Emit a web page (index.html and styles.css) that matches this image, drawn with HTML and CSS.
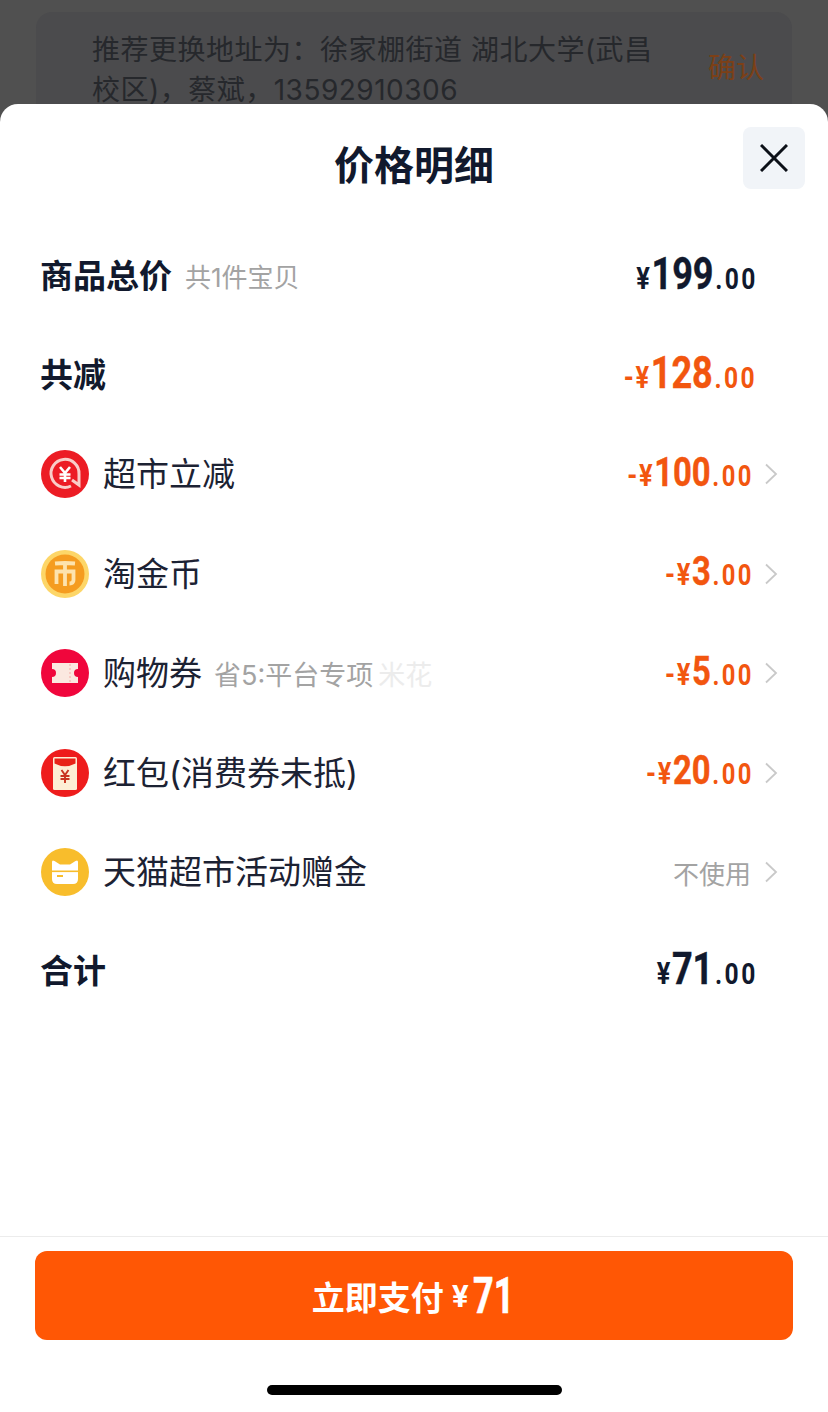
FILE: index.html
```html
<!DOCTYPE html>
<html lang="zh-CN">
<head>
  <meta charset="UTF-8">
  <meta name="viewport" content="width=device-width, initial-scale=1">
  <title>价格明细</title>
  <link rel="stylesheet" href="styles.css">
</head>
<body>
  <!-- 背后的页面，被遮罩压暗 -->
  <div class="backdrop">
    <div class="notice">
      <p class="notice-text">推荐更换地址为：徐家棚街道 湖北大学(武昌校区)，蔡斌，13592910306</p>
      <span class="notice-action">确认</span>
    </div>
  </div>

  <div class="sheet">
    <div class="sheet-head">
      <h1 class="sheet-title">价格明细</h1>
      <button class="close-btn" type="button" aria-label="关闭">
        <svg width="28" height="28" viewBox="0 0 28 28"><path d="M1 1 L27 27 M27 1 L1 27" stroke="#0c1018" stroke-width="3" fill="none"/></svg>
      </button>
    </div>

    <div class="rows">
      <div class="row">
        <div class="row-left"><span class="label-bold">商品总价</span><span class="hint hint-total">共1件宝贝</span></div>
        <div class="price price-big"><span class="cur">¥</span><span class="int">199</span><span class="dec">.00</span></div>
      </div>
      <div class="row">
        <div class="row-left"><span class="label-bold">共减</span></div>
        <div class="price price-big price-off"><span class="cur">-¥</span><span class="int">128</span><span class="dec">.00</span></div>
      </div>
      <div class="row">
        <div class="row-left">
          <svg class="icon" viewBox="0 0 48 48">
            <circle cx="24" cy="24" r="24" fill="#ec1c24"/>
            <path d="M30 36 A14 14 0 1 1 38 24 V35 L31 30" fill="none" stroke="#f9cdc8" stroke-width="3"/>
            <path d="M19 17 L24 23 L29 17 M18.5 24.5 H29.5 M18.5 28 H29.5 M24 23 V32" fill="none" stroke="#fff" stroke-width="2.6"/>
          </svg>
          <span class="label">超市立减</span>
        </div>
        <div class="row-right">
          <div class="price price-off"><span class="cur">-¥</span><span class="int">100</span><span class="dec">.00</span></div>
          <svg class="chevron" width="14" height="22" viewBox="0 0 14 22"><path d="M2 1.5 L12 11 L2 20.5" fill="none" stroke="#c9c9c9" stroke-width="1.8"/></svg>
        </div>
      </div>
      <div class="row">
        <div class="row-left">
          <svg class="icon" viewBox="0 0 48 48">
            <circle cx="24" cy="24" r="24" fill="#fdd668"/>
            <circle cx="24" cy="24" r="19.5" fill="#f59c20"/>
            <path d="M14 13.5 Q24 12.5 34 13.5 M24 14 V36 M15.5 34 V21.5 H32.5 V30 Q32.5 33.5 28.5 33.5" fill="none" stroke="#fde3ae" stroke-width="3.8"/>
          </svg>
          <span class="label">淘金币</span>
        </div>
        <div class="row-right">
          <div class="price price-off"><span class="cur">-¥</span><span class="int">3</span><span class="dec">.00</span></div>
          <svg class="chevron" width="14" height="22" viewBox="0 0 14 22"><path d="M2 1.5 L12 11 L2 20.5" fill="none" stroke="#c9c9c9" stroke-width="1.8"/></svg>
        </div>
      </div>
      <div class="row">
        <div class="row-left">
          <svg class="icon" viewBox="0 0 48 48">
            <circle cx="24" cy="24" r="24" fill="#f0063c"/>
            <path d="M11 14 H37 V20 A4 4 0 0 0 37 28 V34 H11 V28 A4 4 0 0 0 11 20 Z" fill="#fbe8e0"/>
            <path d="M29 15 V33" stroke="#f3b6b0" stroke-width="1.2" stroke-dasharray="2 2"/>
          </svg>
          <span class="label">购物券</span>
          <span class="hint hint-coupon">省5:平台专项<span class="hint-fade">米花</span></span>
        </div>
        <div class="row-right">
          <div class="price price-off"><span class="cur">-¥</span><span class="int">5</span><span class="dec">.00</span></div>
          <svg class="chevron" width="14" height="22" viewBox="0 0 14 22"><path d="M2 1.5 L12 11 L2 20.5" fill="none" stroke="#c9c9c9" stroke-width="1.8"/></svg>
        </div>
      </div>
      <div class="row">
        <div class="row-left">
          <svg class="icon" viewBox="0 0 48 48">
            <circle cx="24" cy="24" r="24" fill="#ee1c1c"/>
            <rect x="12" y="8" width="24" height="33" rx="1.5" fill="#fdeed5"/>
            <path d="M13.5 9.5 H34.5 V14.5 Q24 20 13.5 14.5 Z" fill="#e82318"/>
            <path d="M20.5 21 L24 26 L27.5 21 M19.5 27 H28.5 M19.5 30 H28.5 M24 26 V34" fill="none" stroke="#c8321f" stroke-width="1.9"/>
          </svg>
          <span class="label">红包(消费券未抵)</span>
        </div>
        <div class="row-right">
          <div class="price price-off"><span class="cur">-¥</span><span class="int">20</span><span class="dec">.00</span></div>
          <svg class="chevron" width="14" height="22" viewBox="0 0 14 22"><path d="M2 1.5 L12 11 L2 20.5" fill="none" stroke="#c9c9c9" stroke-width="1.8"/></svg>
        </div>
      </div>
      <div class="row">
        <div class="row-left">
          <svg class="icon" viewBox="0 0 48 48">
            <circle cx="24" cy="24" r="24" fill="#f8bd2c"/>
            <path d="M11 14 Q11 11.5 13.5 13 L19 16.5 H29 L34.5 13 Q37 11.5 37 14 V31 Q37 36 32 36 H16 Q11 36 11 31 Z" fill="#fff"/>
            <rect x="11" y="22.5" width="26" height="1.6" fill="#f8bd2c"/>
            <rect x="16" y="27" width="6" height="2" fill="#f8bd2c"/>
          </svg>
          <span class="label">天猫超市活动赠金</span>
        </div>
        <div class="row-right">
          <span class="unused">不使用</span>
          <svg class="chevron" width="14" height="22" viewBox="0 0 14 22"><path d="M2 1.5 L12 11 L2 20.5" fill="none" stroke="#c9c9c9" stroke-width="1.8"/></svg>
        </div>
      </div>
      <div class="row">
        <div class="row-left"><span class="label-bold">合计</span></div>
        <div class="price price-big"><span class="cur">¥</span><span class="int">71</span><span class="dec">.00</span></div>
      </div>
    </div>

    <div class="sheet-foot">
      <button class="pay-btn" type="button">立即支付<span class="pay-cur">¥</span><span class="pay-int">71</span></button>
      <div class="home-bar"></div>
    </div>
  </div>
</body>
</html>
```
FILE: styles.css
```css
/* 基础 */
html, body {
  margin: 0;
  padding: 0;
}

body {
  width: 828px;
  height: 1412px;
  overflow: hidden;
  display: flex;
  flex-direction: column;
  background: #505050;
  font-family: "Inter", "Noto Sans CJK SC", sans-serif;
  color: #11192d;
}

/* 遮罩后面的地址提示 */
.backdrop {
  height: 104px;
  flex: none;
  padding: 12px 36px 0;
  box-sizing: border-box;
  overflow: hidden;
}

.notice {
  display: flex;
  justify-content: space-between;
  background: #4b4b4d;
  border-radius: 16px;
  height: 140px;
  padding: 18px 28px 0 56px;
}

.notice-text {
  margin: 0;
  width: 575px;
  font-size: 28px;
  letter-spacing: .5px;
  line-height: 40px;
  color: #26282c;
}

.notice-action {
  margin-top: 18px;
  font-size: 28px;
  line-height: 40px;
  color: #7c4017;
}

/* 弹层 */
.sheet {
  flex: 1;
  display: flex;
  flex-direction: column;
  background: #fff;
  border-radius: 18px 18px 0 0;
}

.sheet-head {
  height: 122px;
  flex: none;
  display: flex;
  justify-content: center;
  padding-top: 24px;
  box-sizing: border-box;
  position: relative;
}

.sheet-title {
  margin: 0;
  font-size: 40px;
  line-height: 76px;
  font-weight: 700;
}

.close-btn {
  position: absolute;
  top: 23px;
  right: 23px;
  width: 62px;
  height: 62px;
  padding: 0;
  border: none;
  border-radius: 8px;
  background: #f1f4f8;
  display: flex;
  align-items: center;
  justify-content: center;
}

/* 明细行 */
.rows {
  flex: 1;
  padding: 0 50px 0 41px;
}

.row {
  height: 99.4px;
  display: flex;
  align-items: center;
  justify-content: space-between;
}

.row-left, .row-right {
  display: flex;
  align-items: center;
}

.label-bold {
  font-size: 33px;
  font-weight: 700;
  line-height: 44px;
  margin-left: -1px;
}

.label {
  margin-left: 14px;
  font-size: 33px;
  line-height: 44px;
  color: #1c2233;
}

.icon {
  width: 48px;
  height: 48px;
  flex: none;
}

.hint {
  font-size: 26px;
  color: #a3a3a3;
}

.hint-total {
  margin-left: 13px;
}

.hint-coupon {
  margin-left: 12px;
  font-size: 27px;
}

.hint-fade {
  margin-left: 5px;
  color: #ececec;
}

.unused {
  font-size: 26px;
  color: #a3a3a3;
}

.chevron {
  margin-left: 13px;
}

/* 价格：字体没有窄体，整段横向压缩，靠右对齐 */
.price {
  display: flex;
  align-items: baseline;
  padding-bottom: 4px;
  font-family: "Roboto", sans-serif;
  font-weight: 700;
  color: #11192d;
  transform: scaleX(.82);
  transform-origin: right center;
}

.price .cur {
  font-size: 31px;
  letter-spacing: 2px;
}

.price .int {
  font-size: 40px;
  -webkit-text-stroke: .4px currentColor;
}

.price .dec {
  margin-left: 2px;
  font-size: 29px;
  letter-spacing: 3px;
  margin-right: -3px;
}

.price-big {
  margin-right: 23px;
}

.price-big .int {
  font-size: 44px;
}

.price-big .dec {
  font-size: 30px;
}

.price-off {
  color: #f2560f;
}

/* 底部按钮 */
.sheet-foot {
  height: 176px;
  flex: none;
  box-sizing: border-box;
  border-top: 1px solid #ececec;
  padding: 14px 35px 0;
  display: flex;
  flex-direction: column;
  align-items: center;
}

.pay-btn {
  width: 758px;
  height: 89px;
  padding: 0;
  border: none;
  border-radius: 12px;
  background: #ff5705;
  color: #fff;
  font-family: "Inter", "Noto Sans CJK SC", sans-serif;
  font-size: 33px;
  font-weight: 700;
  display: flex;
  align-items: center;
  justify-content: center;
}

.pay-cur {
  margin-left: 8px;
  font-size: 30px;
}

.pay-int {
  display: inline-block;
  margin-left: 4px;
  margin-right: -14px;
  font-family: "Roboto", sans-serif;
  font-size: 50px;
  -webkit-text-stroke: .6px currentColor;
  transform: scaleX(.72);
  transform-origin: left center;
}

.home-bar {
  width: 295px;
  height: 10px;
  margin-top: 45px;
  border-radius: 5px;
  background: #000;
}
```
